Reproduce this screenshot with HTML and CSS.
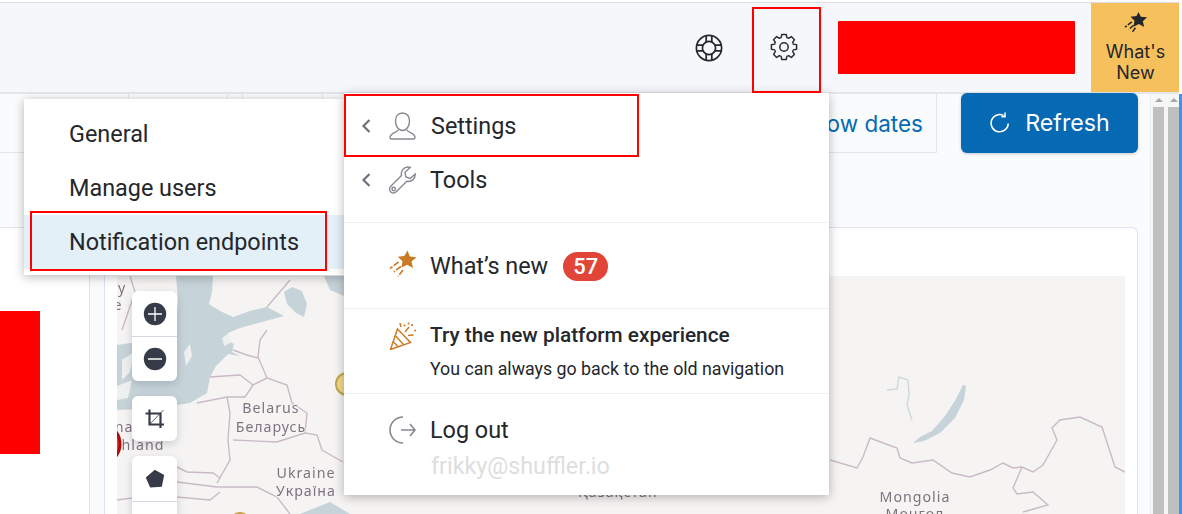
FILE: index.html
```html
<!DOCTYPE html>
<html lang="en">
<head>
<meta charset="utf-8">
<title>Dashboard</title>
<link rel="stylesheet" href="styles.css">
</head>
<body>
<div class="app">
  <header class="topbar">
    <div class="top-actions">
      <button class="icon-btn help-btn" aria-label="Help">
        <svg width="28" height="28" viewBox="0 0 28 28" class="ico-dark"><circle cx="14" cy="14" r="12.6"/><circle cx="14" cy="14" r="6.6"/><path d="M11.2 1.800v6.400M16.800 1.800v6.400M11.200 19.800v6.400M16.800 19.800v6.400M1.800 11.200h6.400M1.800 16.800h6.400M19.800 11.200h6.400M19.800 16.800h6.400"/></svg>
      </button>
      <button class="icon-btn gear-btn" aria-label="Settings">
        <svg width="28" height="28" viewBox="0 0 28 28" class="ico-gear">
          <circle cx="14" cy="14" r="4.200"/>
          <path d="M10.250 4.950L11.130 4.630 11.780 1.400H16.220L16.870 4.630 17.750 4.950"/>
          <path transform="rotate(45 14 14)" d="M10.250 4.950L11.130 4.630 11.780 1.400H16.220L16.870 4.630 17.750 4.950"/>
          <path transform="rotate(90 14 14)" d="M10.250 4.950L11.130 4.630 11.780 1.400H16.220L16.870 4.630 17.750 4.950"/>
          <path transform="rotate(135 14 14)" d="M10.250 4.950L11.130 4.630 11.780 1.400H16.220L16.870 4.630 17.750 4.950"/>
          <path transform="rotate(180 14 14)" d="M10.250 4.950L11.130 4.630 11.780 1.400H16.220L16.870 4.630 17.750 4.950"/>
          <path transform="rotate(225 14 14)" d="M10.250 4.950L11.130 4.630 11.780 1.400H16.220L16.870 4.630 17.750 4.950"/>
          <path transform="rotate(270 14 14)" d="M10.250 4.950L11.130 4.630 11.780 1.400H16.220L16.870 4.630 17.750 4.950"/>
          <path transform="rotate(315 14 14)" d="M10.250 4.950L11.130 4.630 11.780 1.400H16.220L16.870 4.630 17.750 4.950"/>
        </svg>
      </button>
      <div class="redact-top"></div>
      <div class="whats-new-tile">
        <svg width="24" height="22" viewBox="0 0 24 22" class="star-dark"><path class="fill" d="M14.500 0L16.800 4.800 23 5.300 18.800 9.200 20.200 15 14.800 12 9.500 14.700 10.500 8.800 6.500 4.800 12.500 4Z"/><path class="trail" d="M7.800 9.800L1 15.200M9.600 13.200L4.600 17.600M11.400 15.800L8 20.600"/></svg>
        <span>What's<br>New</span>
      </div>
    </div>
  </header>

  <div class="workspace">
    <main class="main">
      <div class="toolbar">
        <div class="seg-group">
          <div class="seg seg-a"></div>
          <div class="seg seg-b"></div>
        </div>
        <div class="seg-group seg-grow">
          <div class="seg seg-c"></div>
          <div class="seg seg-d"><span class="show-dates">Show dates</span></div>
        </div>
        <button class="refresh-btn">
          <svg width="22" height="22" viewBox="0 0 24 24"><path d="M21 12.600a9.400 9.400 0 1 1-5-8.700M17.500 0.500v4.600h-4" /></svg>
          <span>Refresh</span>
        </button>
      </div>

      <div class="content-row">
        <section class="side-panel">
          <div class="redact-side"></div>
        </section>
        <section class="map-card">
          <div class="map">
            <svg class="map-art" width="1008" height="238" viewBox="117 276 1008 238">
              <g class="water">
                <path d="M176 276H213L212 292 209 304 220 311 233 317 250 311 267 307 284 316 262 322 240 328 228 333 226 340 234 344 232 352 240 356 228 354 216 366 210 377 207 393 190 403 157 408 117 410V345L150 340 176 322 178 300Z"/>
                <path d="M284 292L292 287 302 291 307 304 304 317 296 313 287 304Z"/>
                <path d="M324 276H344V296L330 290Z"/>
                <path d="M963 385L966 386 964 400 955 418 940 433 924 441 913 443 920 437 932 431 945 416 956 399Z"/>
                <path d="M300 514L330 502 350 514Z"/>
              </g>
              <g class="land-bits">
                <path d="M222 338L228 334 232 342 224 346Z"/>
                <path d="M184 352L190 344 192 356 186 366Z"/>
                <path d="M122 360L134 352 130 372 122 380Z"/>
                <path d="M117 386L132 380 128 398 117 400Z"/>
              </g>
              <g class="rivers">
                <path d="M887 390L897 389 899 377 908 380 909 395 907 405 912 420"/>
              </g>
              <g class="borders">
                <path d="M830 460L857 468 863 457 870 438 897 448 900 458 912 463 933 460 952 473 970 477 990 470 1003 463 1013 468 1022 467 1033 472 1043 465 1057 440 1052 428 1060 420 1080 417 1102 427 1115 467 1125 472"/>
                <path d="M1022 467L1013 488 1017 494 1033 492 1048 505 1023 512"/>
                <path d="M267 330L260 340 258 357 267 378 287 385 292 403 307 413 305 433 317 435 322 450 343 462"/>
                <path d="M233 350L247 355 258 358"/>
                <path d="M210 377L240 375 253 385 267 378"/>
                <path d="M253 385L245 397 227 397 197 403"/>
                <path d="M227 397L230 413 228 440 230 460 217 483"/>
                <path d="M305 433L277 442 233 440"/>
                <path d="M177 467L187 472 213 473 220 478"/>
                <path d="M177 482L217 487 257 487 277 497 290 514"/>
                <path d="M220 492L210 500 177 497"/>
                <path d="M267 307L290 280"/>
                <path d="M130 276L135 292 122 330"/>
                <path d="M117 500L132 498"/>
              </g>
              <g class="labels">
                <text x="271" y="413">Belarus</text>
                <text x="271" y="432">Беларусь</text>
                <text x="306" y="478">Ukraine</text>
                <text x="306" y="496">Україна</text>
                <text x="915" y="502">Mongolia</text>
                <text x="915" y="519">Монгол</text>
                <text x="618" y="497">Қазақстан</text>
                <text x="122" y="293">y</text>
                <text x="118" y="310">e</text>
                <text x="124" y="432">na</text>
                <text x="143" y="450">hland</text>
              </g>
              <circle class="pin-red" cx="100" cy="444" r="20"/>
              <circle class="pin-yellow" cx="347" cy="384" r="11"/>
              <circle class="pin-yellow" cx="240" cy="523" r="10"/>
            </svg>
            <div class="map-controls">
              <div class="ctrl-group">
                <button class="ctrl"><svg width="24" height="24" viewBox="0 0 24 24"><circle class="disc" cx="12" cy="12" r="11.200"/><path class="cut" d="M12 5v14M5 12h14"/></svg></button>
                <button class="ctrl"><svg width="24" height="24" viewBox="0 0 24 24"><circle class="disc" cx="12" cy="12" r="11.200"/><path class="cut" d="M5 12h14"/></svg></button>
              </div>
              <div class="ctrl-group">
                <button class="ctrl"><svg width="20" height="20" viewBox="0 0 20 20"><path class="crop" d="M4.500 0.500V15.500H19M0.500 4.500H15.500V19"/><path class="crop-thin" d="M4.500 15.500L18.500 1"/></svg></button>
              </div>
              <div class="ctrl-group">
                <button class="ctrl"><svg width="20" height="20" viewBox="0 0 20 20"><path class="disc" d="M9.800 0.800L19.200 6 16.800 17.800 5.200 18.600 0.800 8.600Z"/></svg></button>
                <button class="ctrl"></button>
              </div>
            </div>
          </div>
        </section>
      </div>
    </main>
    <aside class="scrollers">
      <div class="scroll-track"><i class="arrow"></i><b class="thumb"></b></div>
      <div class="scroll-track"><i class="arrow"></i><b class="thumb"></b></div>
    </aside>
  </div>
</div>

<nav class="submenu">
  <a class="sub-item">General</a>
  <a class="sub-item">Manage users</a>
  <a class="sub-item sub-active">Notification endpoints</a>
</nav>

<nav class="usermenu">
  <div class="um-sec um-first">
    <a class="um-row">
      <svg class="chev" width="12" height="16" viewBox="0 0 12 16"><path d="M9.500 2L3.500 8l6 6"/></svg>
      <svg class="um-ico" width="28" height="28" viewBox="0 0 28 28"><path d="M14.500 1C10 1 7.500 4.500 7.500 9S10 18.500 14.500 18.500 21.500 13.500 21.500 9 19 1 14.500 1Z"/><path d="M10.500 17.500C10 20.500 2 20.500 2 25.500 2 26.500 2.500 27 3.500 27H25.500C26.500 27 27 26.500 27 25.500 27 20.500 19 20.500 18.500 17.500"/></svg>
      <span class="um-label um-nudge">Settings</span>
    </a>
    <a class="um-row">
      <svg class="chev" width="12" height="16" viewBox="0 0 12 16"><path d="M9.500 2L3.500 8l6 6"/></svg>
      <svg class="um-ico" width="28" height="28" viewBox="0 0 28 28"><path d="M20 1C15.500 1 12.500 5 13.500 9.500L3 20C1 22 1.300 24.700 2.800 26 4.300 27.300 6.800 27.200 8.500 25.500L18.800 15.200C23.300 16.300 27.500 13 27.200 8L22.200 12.500 17.800 11 17 6.300 22.200 1.500C21.500 1.200 20.800 1 20 1Z"/><circle cx="5.700" cy="23" r="1.700"/></svg>
      <span class="um-label">Tools</span>
    </a>
  </div>
  <div class="um-sec um-news">
    <a class="um-row">
      <i class="chev-space"></i>
      <svg class="um-star" width="30" height="28" viewBox="0 0 30 28"><path class="fill" d="M19.500 0.500L21.800 6.500 28.500 7.200 23.500 11.500 25 18 19 14.700 13.300 17.800 14.500 11.200 9.800 6.800 16.300 6Z"/><path class="trail" d="M10.500 12L2 18.500M12.800 16.500L5.800 22M15 20L10 26.500"/></svg>
      <span class="um-label">What’s new</span>
      <span class="badge">57</span>
    </a>
  </div>
  <div class="um-sec um-try">
    <i class="chev-space"></i>
    <svg class="um-party" width="28" height="28" viewBox="0 0 28 28"><path d="M9.500 7L22.500 20.500 2.500 27.500Z"/><path d="M7.200 13.500L15.500 22.500M5 19.500L10.500 25M13 5L12 1M17 10L21 5M20 13.500L25.500 13"/><path class="dots" d="M16.500 3.500h.1M24 3h.1M27 8.500h.1M20.500 1.500h.1"/></svg>
    <div class="try-text">
      <strong>Try the new platform experience</strong>
      <span>You can always go back to the old navigation</span>
    </div>
  </div>
  <div class="um-sec um-logout">
    <a class="um-row">
      <i class="chev-space"></i>
      <svg class="um-ico um-out" width="28" height="28" viewBox="0 0 28 28"><path d="M15 1A13 13 0 1 0 15 27M13 14H27M22 8l5 6-5 6"/></svg>
      <span class="um-label">Log out</span>
    </a>
    <div class="email">frikky@shuffler.io</div>
  </div>
</nav>

<div class="mark mark-gear"></div>
<div class="mark mark-settings"></div>
<div class="mark mark-notif"></div>
</body>
</html>
```

FILE: styles.css
```css
* { box-sizing: border-box; }
html, body { margin: 0; padding: 0; height: 514px; overflow: hidden; background: #fff; }
body { position: relative; font-family: "Inter", "Liberation Sans", sans-serif; color: #212529; }
button { font: inherit; border: 0; background: none; padding: 0; margin: 0; }
svg { display: block; }

.app { display: flex; flex-direction: column; height: 514px; padding-top: 2px; }

/* Top bar */
.topbar { height: 92px; flex: none; background: #f5f7fa; border-top: 1px solid #dcdee3; border-bottom: 2px solid #e4e6eb; margin-right: 3px; }
.top-actions { display: flex; align-items: stretch; justify-content: flex-end; height: 89px; }
.icon-btn { display: flex; align-items: center; justify-content: center; flex: none; }
.help-btn { width: 60px; margin-right: 13px; }
.gear-btn { width: 69px; margin-right: 17px; padding-right: 5px; padding-bottom: 1px; }
.ico-dark { fill: none; stroke: #24272c; stroke-width: 1.700; }
.ico-gear { fill: none; stroke: #2a2d33; stroke-width: 1.500; stroke-linejoin: round; }
.redact-top { width: 237px; height: 53px; background: #f00; align-self: center; margin-right: 16px; border-radius: 1px; }
.whats-new-tile { width: 88px; flex: none; background: #f6c05c; display: flex; flex-direction: column; align-items: center; padding: 9px 0 0 1px; font-size: 18px; line-height: 21px; text-align: center; color: #23262b; }
.whats-new-tile span { margin-top: 7px; display: block; }
.star-dark .fill { fill: #23262b; }
.star-dark .trail { fill: none; stroke: #23262b; stroke-width: 1.500; stroke-dasharray: 5 1.500; }

/* Workspace */
.workspace { flex: 1; display: flex; min-height: 0; background: #fafbfd; border-right: 3px solid #3a95f0; }
.main { width: 1150px; flex: none; display: flex; flex-direction: column; min-height: 0; }
.toolbar { display: flex; height: 59px; padding-right: 12px; flex: none; }
.seg-group { display: flex; width: 228px; flex: none; border-bottom: 1px solid #e4e6ef; }
.seg-grow { flex: 1; width: auto; margin-left: 14px; border-right: 1px solid #e4e6ef; }
.seg { border-right: 1px solid #e4e6ef; }
.seg-a { width: 129px; }
.seg-b { flex: 1; }
.seg-c { width: 81px; border-left: 1px solid #e4e6ef; }
.seg-d { flex: 1; border-right: 0; display: flex; align-items: center; justify-content: flex-end; padding-right: 13px; }
.show-dates { font-size: 22.500px; color: #0569b3; }
.refresh-btn { width: 177px; margin-left: 24px; margin-top: -1px; height: 60px; border-radius: 6px; background: #0569b3; color: #fff; display: flex; align-items: center; justify-content: center; gap: 14px; font-size: 23.200px; flex: none; box-shadow: 0 1px 3px rgba(30,50,90,.25); position: relative; z-index: 1; }
.refresh-btn svg { fill: none; stroke: #fff; stroke-width: 1.700; }

.content-row { flex: 1; display: flex; gap: 14px; margin-top: 74px; min-height: 0; overflow: hidden; }
.side-panel { width: 90px; flex: none; background: #fff; border-top: 1px solid #e4e6ef; border-right: 1px solid #dfe2ee; padding-top: 83px; }
.redact-side { width: 40px; height: 143px; background: #f00; }
.map-card { width: 1034px; flex: none; background: #fff; border: 1px solid #dfe2ee; border-bottom: 0; border-radius: 6px 6px 0 0; padding: 48px 12px 0; }

/* Map */
.map { position: relative; width: 1008px; height: 238px; background: #f5f4f3; overflow: hidden; }
.map-art { position: absolute; left: 0; top: 0; filter: blur(.35px); }
.water path { fill: #c6d3d8; }
.land-bits path { fill: #eef0ef; }
.rivers path { fill: none; stroke: #cfdade; stroke-width: 1.500; }
.borders path { fill: none; stroke: #c9bac6; stroke-width: 1.400; }
.labels text { font-family: "Noto Sans", "DejaVu Sans", sans-serif; font-size: 14.200px; letter-spacing: 1px; fill: #7f727f; text-anchor: middle; paint-order: stroke; stroke: #f5f4f3; stroke-width: 2px; }
.pin-red { fill: #e33; stroke: #b00a0a; stroke-width: 3; }
.pin-yellow { fill: #f2d98e; stroke: #c4a649; stroke-width: 2; }
.map-controls { position: absolute; left: 15px; top: 15px; display: flex; flex-direction: column; gap: 15px; width: 45px; }
.ctrl-group { background: #fff; border-radius: 6px; box-shadow: 0 3px 8px rgba(50,60,80,.22); overflow: hidden; }
.ctrl { width: 45px; height: 45px; display: flex; align-items: center; justify-content: center; }
.ctrl + .ctrl { border-top: 1px solid #d3d8e2; }
.disc { fill: #373b48; }
.cut { stroke: #fff; stroke-width: 1.300; fill: none; }
.crop { fill: none; stroke: #373b48; stroke-width: 2.200; }
.crop-thin { fill: none; stroke: #373b48; stroke-width: .8; }

/* Scrollbars */
.scrollers { width: 29px; flex: none; display: flex; gap: 4px; padding: 4px 1px 0 2px; background: #f6f6f6; border-left: 1px solid #eceef2; }
.scroll-track { width: 11px; display: flex; flex-direction: column; align-items: center; }
.arrow { width: 0; height: 0; border: 4px solid transparent; border-top: 0; border-bottom: 4px solid #a8a8a8; margin-bottom: 5px; }
.thumb { display: block; width: 11px; flex: 1; background: #bfbfbf; }

/* Sub menu */
.submenu { position: absolute; left: 24px; top: 99px; width: 320px; height: 176px; background: #fff; padding-top: 8px; box-shadow: 0 2px 10px rgba(0,0,0,.28); font-family: "Roboto", sans-serif; font-size: 23.400px; }
.sub-item { display: flex; align-items: center; height: 54px; padding-left: 45px; color: #24272b; }
.sub-active { background: #e3f0f8; }

/* User menu */
.usermenu { position: absolute; left: 344px; top: 93px; width: 485px; height: 402px; background: #fff; box-shadow: 0 2px 10px rgba(0,0,0,.28); font-family: "Roboto", sans-serif; color: #24272b; }
.um-sec { border-bottom: 1px solid #f0f0f0; padding-left: 16px; }
.um-first { height: 130px; padding-top: 6px; }
.um-news { height: 86px; display: flex; align-items: center; }
.um-try { height: 85px; display: flex; align-items: flex-start; padding-top: 13px; }
.um-logout { border-bottom: 0; padding-top: 9px; }
.um-row { display: flex; align-items: center; height: 54px; }
.chev { width: 12px; height: 16px; flex: none; margin-right: 16px; fill: none; stroke: #6e7379; stroke-width: 2.200; }
.chev-space { display: block; width: 28px; flex: none; }
.um-ico { flex: none; fill: none; stroke: #85898f; stroke-width: 1.400; }
.um-out { stroke-width: 1.600; }
.um-label { font-size: 23.400px; margin-left: 14px; }
.um-nudge { margin-left: 15px; }
.um-star { flex: none; margin-right: -2px; margin-bottom: 3px; }
.um-star .fill { fill: #c97a24; }
.um-star .trail { fill: none; stroke: #c97a24; stroke-width: 1.600; stroke-dasharray: 6 1.500; }
.badge { margin-left: 15px; width: 45px; height: 29px; border-radius: 15px; background: #e04538; color: #fff; font-size: 22px; font-weight: 500; display: flex; align-items: center; justify-content: center; position: relative; top: 1px; }
.um-party { flex: none; fill: none; stroke: #cc7c27; stroke-width: 1.500; }
.um-party .dots { stroke-width: 2; stroke-linecap: round; }
.try-text { margin-left: 14px; display: flex; flex-direction: column; }
.try-text strong { font-size: 20.800px; font-weight: 500; line-height: 26px; }
.try-text span { font-size: 17.800px; line-height: 26px; margin-top: 8px; }
.email { margin-left: 71px; margin-top: -4px; font-size: 23.300px; line-height: 26px; color: #dedede; }

/* Red annotations */
.mark { position: absolute; border: 2px solid #f00; }
.mark-gear { left: 752px; top: 7px; width: 69px; height: 86px; }
.mark-settings { left: 344px; top: 94px; width: 295px; height: 63px; }
.mark-notif { left: 30px; top: 211px; width: 297px; height: 60px; }
```
